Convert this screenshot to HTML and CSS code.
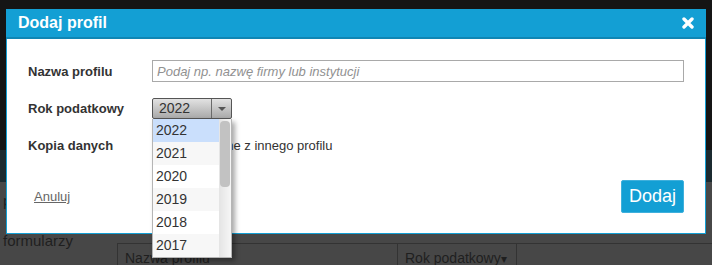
FILE: index.html
```html
<!DOCTYPE html>
<html lang="pl">
<head>
    <meta charset="UTF-8">
    <meta name="viewport" content="width=device-width, initial-scale=1.0">
    <title>Dodaj profil</title>
    <link rel="stylesheet" href="styles.css">
</head>
<body>
    <!-- Strona pod oknem (przyciemniona) -->
    <div class="page">
        <div class="page-top"></div>
        <div class="page-band"></div>
        <div class="page-main">
            <nav class="side">
                <div class="side-item">profile podatników</div>
                <div class="side-item side-item-last">formularzy</div>
            </nav>
            <div class="content">
                <table class="list">
                    <thead>
                        <tr>
                            <th class="col-name">Nazwa profilu</th>
                            <th class="col-year">Rok podatkowy<span class="sort">&#9662;</span></th>
                            <th></th>
                        </tr>
                    </thead>
                </table>
            </div>
        </div>
    </div>

    <!-- Okno dodawania profilu -->
    <div class="modal">
        <div class="modal-header">
            <h2>Dodaj profil</h2>
            <button class="modal-close" type="button">
                <svg width="12" height="12" viewBox="0 0 12 12">
                    <path d="M2 2 L10 10 M10 2 L2 10" stroke="#fff" stroke-width="3.4" stroke-linecap="round"/>
                </svg>
            </button>
        </div>
        <div class="modal-body">
            <form class="form">
                <label class="form-label" for="nazwa">Nazwa profilu</label>
                <input class="form-input" type="text" id="nazwa" placeholder="Podaj np. nazwę firmy lub instytucji">

                <span class="form-label">Rok podatkowy</span>
                <div class="select-wrap">
                    <div class="select">
                        <span class="select-value">2022</span>
                        <span class="select-arrow"></span>
                    </div>
                    <div class="select-drop">
                        <ul class="select-list">
                            <li class="active">2022</li>
                            <li>2021</li>
                            <li>2020</li>
                            <li>2019</li>
                            <li>2018</li>
                            <li>2017</li>
                        </ul>
                        <div class="scrollbar">
                            <div class="scroll-thumb"></div>
                        </div>
                    </div>
                </div>

                <span class="form-label">Kopia danych</span>
                <label class="check"><input type="checkbox"> Kopiuj dane z innego profilu</label>
            </form>
            <div class="modal-footer">
                <a href="#" class="cancel">Anuluj</a>
                <button class="btn-add" type="button">Dodaj</button>
            </div>
        </div>
    </div>
</body>
</html>
```

FILE: styles.css
```css
/* Ogólne */
body {
    margin: 0;
    width: 712px;
    height: 265px;
    overflow: hidden;
    font-family: "Liberation Sans", Arial, sans-serif;
    font-size: 13px;
    color: #333;
    background-color: #474747;
}

/* Strona pod spodem */
.page {
    display: flex;
    flex-direction: column;
    height: 265px;
}

.page-top {
    flex-shrink: 0;
    height: 150px;
    background-color: #151515;
}

.page-band {
    flex-shrink: 0;
    height: 32px;
    background-color: #1b2a30;
}

.page-main {
    flex: 1;
    min-height: 0;
    overflow: hidden;
    display: flex;
    background-color: #474747;
    color: #1f1f1f;
}

.side {
    width: 117px;
    padding: 10px 0 0 3px;
    box-sizing: border-box;
    font-size: 15px;
}

.side-item {
    line-height: 18px;
    white-space: nowrap;
}

.side-item-last {
    margin-top: 22px;
}

.content {
    flex: 1;
    padding-top: 61px;
}

.list {
    width: 100%;
    border-collapse: collapse;
}

.list th {
    border-top: 1px solid #333;
    border-left: 1px solid #333;
    height: 28px;
    padding: 0 0 0 7px;
    text-align: left;
    font-weight: normal;
    font-size: 14px;
    color: #1f1f1f;
    white-space: nowrap;
}

.col-name {
    width: 272px;
}

.col-year {
    width: 111px;
}

.sort {
    font-size: 12px;
}

/* Okno modalne */
.modal {
    position: absolute;
    top: 9px;
    left: 6px;
    width: 700px;
    background-color: #fff;
    border: 1px solid #139fd4;
    border-top: none;
    box-sizing: border-box;
}

.modal-header {
    height: 28px;
    margin: 0 -1px;
    padding: 0 12px;
    display: flex;
    align-items: center;
    justify-content: space-between;
    background-color: #139fd4;
    border-bottom: 2px solid #0f86b4;
}

.modal-header h2 {
    margin: 0;
    font-size: 16px;
    font-weight: bold;
    color: #fff;
}

.modal-close {
    background: none;
    border: none;
    padding: 0;
    display: flex;
    cursor: pointer;
}

.modal-body {
    padding: 21px 21px 20px 21px;
}

.form {
    display: grid;
    grid-template-columns: 124px 1fr;
    grid-auto-rows: 21px;
    grid-template-rows: 22px;
    row-gap: 16px;
    align-items: center;
    margin: 0;
}

.form-label {
    font-weight: bold;
    color: #333;
}

.form-input {
    height: 22px;
    padding: 0 4px;
    border: 1px solid #a9a9a9;
    box-sizing: border-box;
    font-family: inherit;
    font-size: 13px;
}

.form-input::placeholder {
    color: #919191;
    font-style: italic;
}

/* Rozwijana lista roku */
.select-wrap {
    position: relative;
    width: 80px;
    height: 21px;
}

.select {
    display: flex;
    height: 21px;
    border: 1px solid #555;
    border-radius: 2px;
    box-sizing: border-box;
    background: linear-gradient(#e2e2e2, #a9a9a9);
}

.select-value {
    flex: 1;
    padding-left: 6px;
    line-height: 19px;
    font-size: 14px;
    color: #333;
    border-right: 1px solid #6a6a6a;
}

.select-arrow {
    width: 19px;
    display: flex;
    align-items: center;
    justify-content: center;
}

.select-arrow::after {
    content: "";
    border-left: 4px solid transparent;
    border-right: 4px solid transparent;
    border-top: 4px solid #555;
}

.select-drop {
    position: absolute;
    top: 100%;
    left: 0;
    width: 80px;
    height: 139px;
    display: flex;
    background-color: #fff;
    border: 1px solid #b5b5b5;
    border-top: none;
    box-sizing: border-box;
    box-shadow: 3px 3px 5px rgba(0, 0, 0, 0.35);
    overflow: hidden;
    z-index: 2;
}

.select-list {
    flex: 1;
    margin: 0;
    padding: 0;
    list-style: none;
}

.select-list li {
    height: 23px;
    line-height: 23px;
    padding-left: 3px;
    font-size: 14px;
    color: #333;
}

.select-list li:nth-child(even) {
    background-color: #f7f7f7;
}

.select-list li.active {
    background-color: #cadffc;
}

/* Pasek przewijania listy */
.scrollbar {
    width: 12px;
    padding: 2px 1px 0 1px;
    box-sizing: border-box;
    background: linear-gradient(to right, #e4e4e4, #f6f6f6);
}

.scroll-thumb {
    height: 66px;
    background-color: #c2c2c2;
    border-radius: 4px;
}

.check {
    display: flex;
    align-items: center;
    gap: 7px;
    color: #333;
}

.check input {
    margin: 0;
    width: 13px;
    height: 13px;
}

/* Stopka */
.modal-footer {
    display: flex;
    align-items: center;
    justify-content: space-between;
    margin-top: 24px;
}

.cancel {
    margin-left: 6px;
    color: #666;
    font-size: 13px;
}

.btn-add {
    height: 33px;
    width: 63px;
    padding: 0;
    background-color: #139fd4;
    border: 1px solid #3fb0dc;
    border-radius: 2px;
    color: #fff;
    font-family: inherit;
    font-size: 18px;
    cursor: pointer;
}
```
